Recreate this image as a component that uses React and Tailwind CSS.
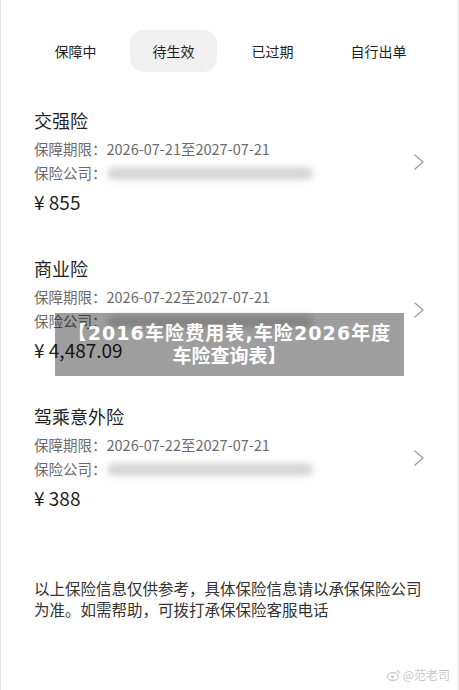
import React from "react";

const font = { fontFamily: '"Noto Sans CJK SC", "Noto Sans", sans-serif' };
const overlayFont = { fontFamily: '"DejaVu Sans", "Noto Sans CJK SC", sans-serif' };

function Chevron() {
  return (
    <svg width="12" height="16" viewBox="0 0 12 16" fill="none" className="mr-[-2px]">
      <path d="M2 1 L10 8 L2 15" stroke="#9a9a9a" strokeWidth="1.2" strokeLinecap="round" strokeLinejoin="round" />
    </svg>
  );
}

function Card({ title, period, price }) {
  return (
    <div className="flex items-center pl-[33px] pr-[35px]">
      <div className="flex-1 flex flex-col">
        <div className="h-[26px] leading-[26px] text-[18px] text-[#1f1f1f]">{title}</div>
        <div className="mt-[4px] h-[24px] leading-[24px] text-[14.5px] text-[#6b6b6b]">
          保障期限：{period}
        </div>
        <div className="h-[24px] leading-[24px] text-[14.5px] text-[#6b6b6b] flex items-center">
          <span>保险公司：</span>
          <span className="h-[13px] w-[206px] rounded-full bg-[#d6d6d6] blur-[3px]" />
        </div>
        <div className="mt-[3px] h-[28px] leading-[28px] text-[19px] text-[#1f1f1f]">¥ {price}</div>
      </div>
      <Chevron />
    </div>
  );
}

export default function App() {
  return (
    <div style={font} className="relative w-[459px] h-[690px] bg-white border-l border-r border-[#e4e4e4] overflow-hidden">
      <div className="pt-[30px] flex items-center text-[14px] text-[#1f1f1f]">
        <span className="ml-[31px] w-[87px] h-[42px] flex items-center justify-center">保障中</span>
        <span className="ml-[11px] w-[87px] h-[42px] flex items-center justify-center rounded-[14px] bg-[#f0f0f0]">待生效</span>
        <span className="ml-[12px] w-[87px] h-[42px] flex items-center justify-center">已过期</span>
        <span className="ml-[19px] w-[87px] h-[42px] flex items-center justify-center">自行出单</span>
      </div>

      <div className="mt-[35px] flex flex-col gap-[39px]">
        <Card title="交强险" period="2026-07-21至2027-07-21" price="855" />
        <Card title="商业险" period="2026-07-22至2027-07-21" price="4,487.09" />
        <Card title="驾乘意外险" period="2026-07-22至2027-07-21" price="388" />
      </div>

      <div className="mt-[66px] pl-[33px] pr-[10px] text-[15.5px] leading-[21px] text-[#333333] whitespace-nowrap">
        <div>以上保险信息仅供参考，具体保险信息请以承保保险公司</div>
        <div>为准。如需帮助，可拨打承保保险客服电话</div>
      </div>

      <div style={overlayFont} className="absolute left-[54px] top-[313px] w-[349px] h-[63px] bg-[rgba(0,0,0,0.38)] flex flex-col items-center justify-center text-white font-bold text-[19px] leading-[23px]">
        <div className="tracking-[1.1px]">【2016车险费用表,车险2026年度</div>
        <div>车险查询表】</div>
      </div>

      <div className="absolute right-[8px] bottom-[6px] flex items-center gap-[2px] text-[12px] text-[#c8c8c8]">
        <svg width="14" height="12" viewBox="0 0 14 12" fill="none">
          <ellipse cx="6" cy="7.5" rx="5.5" ry="3.8" stroke="#c8c8c8" strokeWidth="1.2" />
          <circle cx="5.5" cy="7.8" r="1.6" fill="#c8c8c8" />
          <path d="M9.5 1.5 A3 3 0 0 1 12.5 4.5" stroke="#c8c8c8" strokeWidth="1.1" />
        </svg>
        <span>@范老司</span>
      </div>
    </div>
  );
}
